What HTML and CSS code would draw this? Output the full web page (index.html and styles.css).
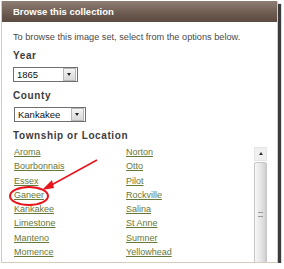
FILE: index.html
```html
<!DOCTYPE html>
<html lang="en">
<head>
  <meta charset="UTF-8">
  <title>Browse this collection</title>
  <link rel="stylesheet" href="styles.css">
</head>
<body>
  <div class="panel">
    <div class="panel-head">Browse this collection</div>
    <div class="panel-body">
      <p class="intro">To browse this image set, select from the options below.</p>
      <h3>Year</h3>
      <div class="select year"><span>1865</span><i class="btn"></i></div>
      <h3>County</h3>
      <div class="select county"><span>Kankakee</span><i class="btn"></i></div>
      <h3>Township or Location</h3>
      <div class="list">
        <div class="cols">
          <a href="#">Aroma</a><a href="#">Norton</a>
          <a href="#">Bourbonnais</a><a href="#">Otto</a>
          <a href="#">Essex</a><a href="#">Pilot</a>
          <a href="#">Ganeer</a><a href="#">Rockville</a>
          <a href="#">Kankakee</a><a href="#">Salina</a>
          <a href="#">Limestone</a><a href="#">St Anne</a>
          <a href="#">Manteno</a><a href="#">Sumner</a>
          <a href="#">Momence</a><a href="#">Yellowhead</a>
        </div>
        <div class="scrollbar">
          <div class="sb-up"></div>
          <div class="sb-thumb"><span></span></div>
        </div>
      </div>
    </div>
  </div>
  <svg class="mark" width="284" height="269" viewBox="0 0 284 269">
    <ellipse cx="29" cy="196" rx="19" ry="9" fill="none" stroke="#e8141b" stroke-width="2"/>
    <line x1="97" y1="160" x2="46" y2="188" stroke="#e8141b" stroke-width="1.5"/>
    <polygon points="42,190 52,180 54,188" fill="#e8141b"/>
  </svg>
</body>
</html>
```

FILE: styles.css
```css
body {
  margin: 0;
  font-family: "Liberation Sans", Arial, sans-serif;
  background: #fff;
}

.panel {
  margin: 1px 0 0 1px;
  width: 275px;
  height: 261px;
  border: 1px solid #d6ccbe;
  border-top: 0;
  box-shadow: 3px 3px 1px #3c3c3c;
  background: #fff;
  overflow: hidden;
}

.panel-head {
  height: 21px;
  line-height: 21px;
  padding-left: 11px;
  color: #fff;
  font-size: 9.5px;
  font-weight: bold;
  background: linear-gradient(#8e7f74, #6c5a4f 60%, #5b4a40);
}

.panel-body {
  padding: 0 0 0 11px;
}

.intro {
  margin: 10px 0 0;
  font-size: 9.2px;
  color: #4a4a4a;
}

h3 {
  margin: 8px 0 0;
  font-size: 10px;
  letter-spacing: 0.6px;
  color: #3c3c3c;
}

.select {
  display: flex;
  align-items: center;
  justify-content: space-between;
  height: 13px;
  margin-top: 6px;
  border: 1px solid #6f6f6f;
  font-size: 9.5px;
  color: #111;
  padding-left: 3px;
}
.select.year {
  width: 60px;
}
.select.county {
  width: 67px;
  margin-left: 1px;
}

.btn {
  position: relative;
  width: 11px;
  height: 11px;
  margin-right: 1px;
  border: 1px solid #b7b7b7;
  background: linear-gradient(#f4f4f4, #d9d9d9);
}
.btn::after {
  content: "";
  position: absolute;
  left: 3px;
  top: 4px;
  border-left: 2.5px solid transparent;
  border-right: 2.5px solid transparent;
  border-top: 3px solid #222;
}

.list {
  display: flex;
  margin-top: 5px;
}

.cols {
  display: grid;
  grid-template-columns: 112px 128px;
  grid-auto-rows: 14.3px;
  padding: 1px 0 0 1px;
}
.cols a {
  font-size: 9px;
  color: #66783a;
  text-decoration: underline;
}

.scrollbar {
  display: flex;
  flex-direction: column;
  width: 13px;
  height: 120px;
  margin-top: 1px;
}
.sb-up {
  height: 12px;
  position: relative;
  background: #f0f0f0;
  border: 1px solid #e4e4e4;
}
.sb-up::after {
  content: "";
  position: absolute;
  left: 4px;
  top: 4px;
  border-left: 2.5px solid transparent;
  border-right: 2.5px solid transparent;
  border-bottom: 3px solid #333;
}
.sb-thumb {
  flex: 1;
  margin-top: 1px;
  border: 1px solid #c5c5c5;
  border-radius: 2px;
  background: linear-gradient(90deg, #f7f7f7, #e2e2e2 60%, #cfcfcf);
  display: flex;
  align-items: center;
  justify-content: center;
}
.sb-thumb span {
  width: 5px;
  height: 5px;
  border-top: 1px solid #999;
  border-bottom: 1px solid #999;
  box-sizing: border-box;
}

.mark {
  position: absolute;
  left: 0;
  top: 0;
}
```
